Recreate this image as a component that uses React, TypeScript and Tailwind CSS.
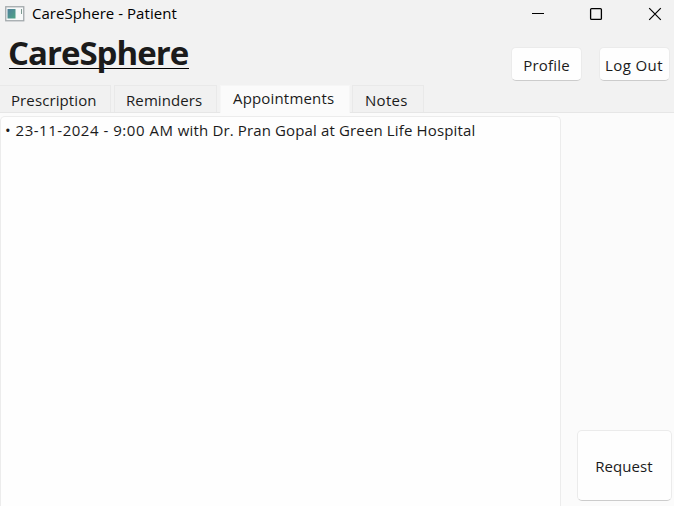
import React from 'react';

function AppIcon() {
  return (
    <svg width="20" height="16" viewBox="0 0 20 16" className="block shrink-0">
      <rect x="0.75" y="0.75" width="18" height="14" fill="#f7f9f9" stroke="#a3a9ac" strokeWidth="1.3" />
      <defs>
        <linearGradient id="pane" x1="0" y1="0" x2="1" y2="1">
          <stop offset="0" stopColor="#4f7f9c" />
          <stop offset="1" stopColor="#4fa585" />
        </linearGradient>
      </defs>
      <rect x="2.5" y="3" width="8" height="9.5" fill="url(#pane)" />
      <rect x="16" y="3" width="1" height="5" fill="#7d9a92" />
    </svg>
  );
}

function TitleBar() {
  return (
    <header className="flex h-[27px] items-center pl-[5px] text-black">
      <AppIcon />
      <span className="ml-[7px] text-[15px] leading-[27px] tracking-[0.04px]">CareSphere - Patient</span>
      <div className="ml-auto flex items-center pr-[12px]">
        <svg width="14" height="14" viewBox="0 0 14 14" className="mr-[44px]">
          <path d="M1 6.5h12" stroke="#000" strokeWidth="1" />
        </svg>
        <svg width="14" height="14" viewBox="0 0 14 14" className="mr-[45px]">
          <rect x="1.6" y="1.6" width="10.8" height="10.8" rx="1" fill="none" stroke="#000" strokeWidth="1.3" />
        </svg>
        <svg width="14" height="14" viewBox="0 0 14 14">
          <path d="M1.2 1.2l11.6 11.6M12.8 1.2L1.2 12.8" stroke="#000" strokeWidth="1.2" />
        </svg>
      </div>
    </header>
  );
}

function Button({ label, className }: { label: string; className: string }) {
  return (
    <button
      className={`flex items-center justify-center whitespace-nowrap rounded-[5px] border border-[#ebebeb] border-b-[#cccccc] bg-[#fefefe] text-[15px] leading-[20px] ${className}`}
    >
      {label}
    </button>
  );
}

function Tab({ label, active, className }: { label: string; active?: boolean; className: string }) {
  return (
    <button
      className={`flex items-start whitespace-nowrap border border-b-0 text-[15px] leading-[20px] ${
        active ? 'h-[28px] border-[#f6f6f6] bg-[#fbfbfb] pt-[2px]' : 'h-[27px] border-[#e9e9e9] bg-[#f1f1f1] pt-[4px]'
      } ${className}`}
    >
      {label}
    </button>
  );
}

export default function App() {
  return (
    <div className="flex h-[506px] w-[674px] flex-col overflow-hidden bg-[#f2f2f2] font-['Open_Sans','Noto_Sans',sans-serif] text-[#1b1b1b]">
      <TitleBar />
      <div className="flex h-[57px] items-start pl-[9px] pr-[4px]">
        <h1 className="mt-[5px] h-[37px] w-[180px] whitespace-nowrap border-b border-black text-[33px] font-bold leading-[41px] tracking-[-1px]">
          <span className="-ml-px">CareSphere</span>
        </h1>
        <div className="ml-auto mt-[20px] flex gap-[17px]">
          <Button label="Profile" className="h-[34px] w-[71px] pt-[2px] tracking-[0.2px]" />
          <Button label="Log Out" className="h-[34px] w-[71px] pl-0 pr-px pt-[2px] tracking-[0.4px]" />
        </div>
      </div>
      <nav className="mt-px flex h-[28px] items-start border-b border-[#e6e6e6]">
        <Tab label="Prescription" className="w-[111px] border-l-0 pl-[11px] tracking-[0.1px]" />
        <Tab label="Reminders" className="ml-[3px] w-[103px] pl-[11px] tracking-[0.1px]" />
        <Tab label="Appointments" active className="ml-[3px] w-[130px] pl-[12px] tracking-[0.17px]" />
        <Tab label="Notes" className="ml-[2px] w-[72px] pl-[12px] tracking-[0.3px]" />
      </nav>
      <main className="flex flex-1 bg-[#fbfbfb] pt-[3px]">
        <section className="w-[561px] rounded-t-[5px] border border-b-0 border-[#ececec] bg-[#fefefe] pl-[4px] pt-[3px] text-[15px] leading-[20px]">
          <p className="whitespace-nowrap tracking-[0.14px]">
            <span className="tracking-[0.52px]">• 23-11-2024 - 9:00 AM </span>
            with Dr. Pran Gopal at Green Life Hospital
          </p>
        </section>
        <aside className="flex flex-1 items-end justify-end pb-[5px] pr-[2px]">
          <Button label="Request" className="h-[71px] w-[95px] pr-px tracking-[0.08px]" />
        </aside>
      </main>
    </div>
  );
}
